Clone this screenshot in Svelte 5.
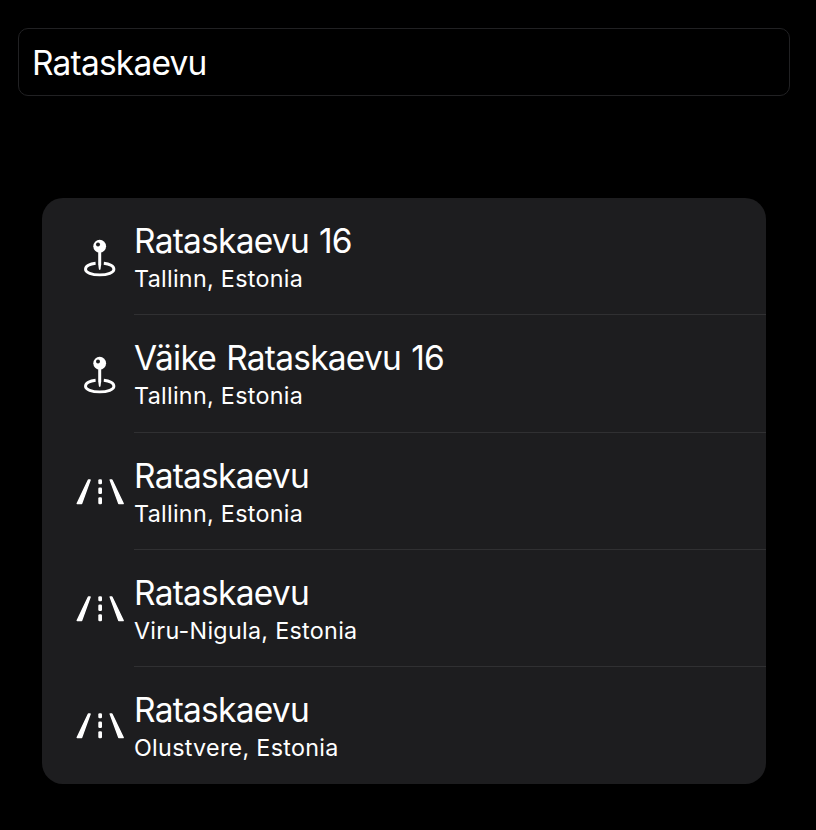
<script>
  const results = [
    { kind: 'pin', title: 'Rataskaevu 16', place: 'Tallinn, Estonia' },
    { kind: 'pin', title: 'Väike Rataskaevu 16', place: 'Tallinn, Estonia' },
    { kind: 'road', title: 'Rataskaevu', place: 'Tallinn, Estonia' },
    { kind: 'road', title: 'Rataskaevu', place: 'Viru-Nigula, Estonia' },
    { kind: 'road', title: 'Rataskaevu', place: 'Olustvere, Estonia' }
  ];
  let query = $state('Rataskaevu');
</script>

<main>
  <input type="text" aria-label="Address" spellcheck="false" bind:value={query} />
  <ul>
    {#each results as item}
      <li>
        <span class="icon">
          {#if item.kind === 'pin'}
            <svg width="50" height="50" viewBox="0 -1.7 50 50">
              <path
                d="M20.6 28.5C14.8 29.1 10.5 31.5 10.5 34.5C10.5 37.8 16.8 40.2 24.7 40.2S38.9 37.8 38.9 34.5C38.9 31.5 34.6 29.1 28.8 28.5"
                fill="none" stroke="#fff" stroke-width="2.9" stroke-linecap="butt" />
              <path d="M23.2 15H26.2V29.5L25.5 34.6Q24.7 36 23.9 34.6L23.2 29.5Z" fill="#fff" />
              <circle cx="24.7" cy="11.5" r="6.4" fill="#fff" />
              <circle cx="23" cy="9.9" r="2" fill="#1d1d1f" />
            </svg>
          {:else}
            <svg width="50" height="50" viewBox="0 0.9 50 50">
              <g fill="#fff" stroke="#fff" stroke-width="1.4" stroke-linejoin="round">
                <path d="M13.4 12.9H15.1L6.6 36.5H2.2Z" />
                <path d="M35.2 12.9H36.9L48.2 36.5H43.8Z" />
              </g>
              <g fill="#fff">
                <rect x="23.3" y="12.2" width="3.7" height="5" rx="1.3" />
                <rect x="23.3" y="20.4" width="3.7" height="6.6" rx="1.3" />
                <rect x="23.3" y="30.2" width="3.7" height="7" rx="1.3" />
              </g>
            </svg>
          {/if}
        </span>
        <div class="text">
          <div class="title">{item.title}</div>
          <div class="place">{item.place}</div>
        </div>
      </li>
    {/each}
  </ul>
</main>

<style>
  :global(body) {
    margin: 0;
    background: #000;
  }
  main {
    box-sizing: border-box;
    height: 830px;
    padding: 28px 26px 0 18px;
    background: #000;
    color: #fff;
    font-family: Inter, 'Liberation Sans', sans-serif;
  }
  input {
    display: block;
    box-sizing: border-box;
    width: 772px;
    height: 68px;
    margin: 0;
    padding: 2px 13px 0;
    border: 1px solid #212123;
    border-radius: 10px;
    outline: none;
    background: #000;
    color: #fff;
    font: 400 33.5px/40px Inter, 'Liberation Sans', sans-serif;
    letter-spacing: -0.8px;
  }
  ul {
    width: 724px;
    margin: 102px 0 0 24px;
    padding: 0;
    border-radius: 21px;
    background: #1d1d1f;
    list-style: none;
    overflow: hidden;
  }
  li {
    display: flex;
    height: 117.3px;
  }
  .icon {
    width: 50px;
    padding: 35px 8px 0 33px;
  }
  svg {
    display: block;
  }
  .text {
    box-sizing: border-box;
    flex: 1;
    margin-left: 1px;
    padding-top: 23px;
    border-bottom: 1px solid #303032;
    white-space: nowrap;
  }
  li:last-child .text {
    border-bottom: 0;
  }
  .title {
    font-size: 33.5px;
    line-height: 40px;
    letter-spacing: -0.76px;
    word-spacing: 1.4px;
  }
  .place {
    font-size: 23.3px;
    line-height: 36px;
    letter-spacing: 0.3px;
  }
</style>
